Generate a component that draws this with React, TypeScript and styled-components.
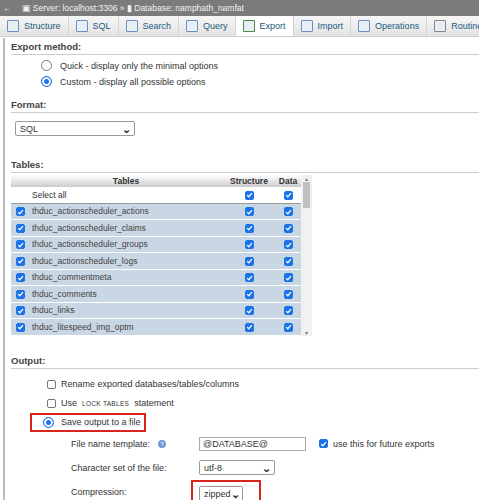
import React from 'react'
import styled, { createGlobalStyle } from 'styled-components'

const Global = createGlobalStyle`
  body { margin: 0; background: #fff; font-family: "Liberation Sans", Arial, sans-serif; font-size: 9px; color: #333; }
`

const tabs = ['Structure', 'SQL', 'Search', 'Query', 'Export', 'Import', 'Operations', 'Routines', 'Events']
const tables = [
  'thduc_actionscheduler_actions',
  'thduc_actionscheduler_claims',
  'thduc_actionscheduler_groups',
  'thduc_actionscheduler_logs',
  'thduc_commentmeta',
  'thduc_comments',
  'thduc_links',
  'thduc_litespeed_img_optm',
]

const Check: React.FC<{ on?: boolean }> = ({ on = true }) => (
  <CheckBox $on={on}>
    {on && (
      <svg width="8" height="8" viewBox="0 0 8 8">
        <path d="M1.3 4.2 L3.2 6 L6.8 1.8" stroke="#fff" strokeWidth="1.4" fill="none" />
      </svg>
    )}
  </CheckBox>
)

const Radio: React.FC<{ on?: boolean }> = ({ on }) => <RadioDot $on={on} />

const App: React.FC = () => (
  <>
    <Global />
    <ServerBar>
      <span>←</span>
      <span>▣ Server: localhost:3306 » ▮ Database: namphath_namfat</span>
    </ServerBar>
    <TabBar>
      {tabs.map((t) => (
        <Tab key={t} $active={t === 'Export'}>
          <TabIcon $c={t === 'Export' ? '#4a8a3a' : t === 'Routines' ? '#888' : '#6b8fbf'} />
          {t}
        </Tab>
      ))}
    </TabBar>
    <Page>
      <Heading>Export method:</Heading>
      <Options>
        <Opt><Radio />Quick - display only the minimal options</Opt>
        <Opt><Radio on />Custom - display all possible options</Opt>
      </Options>
      <Heading>Format:</Heading>
      <Select style={{ width: 120, marginLeft: 4 }}>SQL<Chev>⌄</Chev></Select>
      <Heading>Tables:</Heading>
      <TableWrap>
        <Table>
          <thead>
            <tr>
              <Th style={{ width: 14 }}></Th>
              <Th>Tables</Th>
              <Th style={{ width: 48 }}>Structure</Th>
              <Th style={{ width: 22 }}>Data</Th>
            </tr>
          </thead>
          <tbody>
            <SelRow>
              <Td></Td>
              <Td>Select all</Td>
              <Td $c><Check /></Td>
              <Td $c><Check /></Td>
            </SelRow>
            {tables.map((t) => (
              <Row key={t}>
                <Td $c><Check /></Td>
                <Td>{t}</Td>
                <Td $c><Check /></Td>
                <Td $c><Check /></Td>
              </Row>
            ))}
          </tbody>
        </Table>
        <Scroll>
          <span>▴</span>
          <Thumb />
          <span style={{ marginTop: 'auto' }}>▾</span>
        </Scroll>
      </TableWrap>
      <Heading style={{ marginTop: 16 }}>Output:</Heading>
      <OutList>
        <Line $indent={36}><Check on={false} />Rename exported databases/tables/columns</Line>
        <Line $indent={36}><Check on={false} />Use <Small>LOCK TABLES</Small> statement</Line>
        <RedBox><Radio on />Save output to a file</RedBox>
        <Field>
          <Label>File name template: <Help>?</Help></Label>
          <Input>@DATABASE@</Input>
          <Check /> use this for future exports
        </Field>
        <Field>
          <Label>Character set of the file:</Label>
          <Select style={{ width: 76 }}>utf-8<Chev>⌄</Chev></Select>
        </Field>
        <Field>
          <Label>Compression:</Label>
          <RedWrap>
            <Select style={{ width: 44 }}>zipped<Chev>⌄</Chev></Select>
          </RedWrap>
        </Field>
      </OutList>
    </Page>
  </>
)

export default App

const ServerBar = styled.div`
  height: 16px;
  background: #7b7b7b;
  color: #f2f2f2;
  display: flex;
  align-items: center;
  gap: 10px;
  padding-left: 3px;
  font-size: 8.5px;
`
const TabBar = styled.div`
  height: 20px;
  background: linear-gradient(#f6f6f6, #e3e3e3);
  border-bottom: 1px solid #ccc;
  display: flex;
  white-space: nowrap;
  overflow: hidden;
`
const Tab = styled.div<{ $active?: boolean }>`
  display: flex;
  align-items: center;
  gap: 5px;
  padding: 0 7px;
  border-right: 1px solid #d4d4d4;
  background: ${(p) => (p.$active ? '#fff' : 'transparent')};
  color: #235a81;
  font-size: 9px;
`
const TabIcon = styled.span<{ $c: string }>`
  width: 10px;
  height: 10px;
  border: 1px solid ${(p) => p.$c};
  background: #e8eef6;
  border-radius: 1px;
`
const Page = styled.div`
  border-left: 2px solid #bbb;
  margin-left: 3px;
  padding-left: 6px;
`
const Heading = styled.div`
  font-weight: bold;
  font-size: 9.5px;
  color: #444;
  padding: 3px 0 2px;
  border-bottom: 1px solid #ccc;
  margin-top: 1px;
`
const Options = styled.div`
  padding: 5px 0 8px 30px;
  display: flex;
  flex-direction: column;
  gap: 5px;
`
const Opt = styled.div`
  display: flex;
  align-items: center;
  gap: 8px;
`
const RadioDot = styled.span<{ $on?: boolean }>`
  width: 9px;
  height: 9px;
  border-radius: 50%;
  border: 1px solid ${(p) => (p.$on ? '#1a73e8' : '#777')};
  box-shadow: inset 0 0 0 2px #fff;
  background: ${(p) => (p.$on ? '#1a73e8' : '#fff')};
  flex: none;
`
const Select = styled.div`
  height: 15px;
  border: 1px solid #999;
  border-radius: 2px;
  margin: 8px 0 20px;
  display: flex;
  align-items: center;
  padding: 0 3px 0 4px;
  box-sizing: border-box;
  background: #fff;
  font-size: 9px;
`
const Chev = styled.span`
  margin-left: auto;
  font-size: 11px;
  line-height: 6px;
  font-weight: bold;
`
const TableWrap = styled.div`
  display: flex;
  margin-top: 2px;
  width: 302px;
`
const Table = styled.table`
  border-collapse: collapse;
  width: 290px;
  font-size: 8.5px;
`
const Th = styled.th`
  background: linear-gradient(#fff, #ccc);
  height: 12px;
  font-weight: bold;
  color: #333;
  font-size: 8.5px;
  padding: 0 2px;
`
const Td = styled.td<{ $c?: boolean }>`
  height: 15.5px;
  padding: 0 3px;
  text-align: ${(p) => (p.$c ? 'center' : 'left')};
`
const SelRow = styled.tr`
  background: #fff;
  border-bottom: 1px solid #999;
`
const Row = styled.tr`
  background: #c9d6e3;
  border-bottom: 1px solid #fff;
  color: #444;
`
const Scroll = styled.div`
  width: 11px;
  background: #f1f1f1;
  display: flex;
  flex-direction: column;
  align-items: center;
  font-size: 6px;
  color: #777;
`
const Thumb = styled.div`
  width: 7px;
  height: 26px;
  background: #c1c1c1;
`
const CheckBox = styled.span<{ $on: boolean }>`
  display: inline-flex;
  align-items: center;
  justify-content: center;
  width: 9px;
  height: 9px;
  border-radius: 2px;
  vertical-align: middle;
  background: ${(p) => (p.$on ? '#1a73e8' : '#fff')};
  border: 1px solid ${(p) => (p.$on ? '#1a73e8' : '#777')};
  box-sizing: border-box;
  flex: none;
`
const OutList = styled.div`
  display: flex;
  flex-direction: column;
  padding-top: 6px;
`
const Line = styled.div<{ $indent: number }>`
  display: flex;
  align-items: center;
  gap: 5px;
  padding-left: ${(p) => p.$indent}px;
  height: 19px;
`
const Small = styled.span`
  font-size: 6.5px;
  letter-spacing: 0.3px;
`
const RedBox = styled.div`
  display: flex;
  align-items: center;
  gap: 7px;
  margin-left: 19px;
  width: 116px;
  height: 19px;
  border: 2px solid #d9241c;
  box-sizing: border-box;
  padding-left: 11px;
  white-space: nowrap;
`
const Field = styled.div`
  display: flex;
  align-items: center;
  gap: 5px;
  padding-left: 60px;
  height: 24px;
  & ${Select} { margin: 0; }
`
const Label = styled.div`
  width: 123px;
  display: flex;
  align-items: center;
  gap: 8px;
`
const Help = styled.span`
  width: 8px;
  height: 8px;
  border-radius: 50%;
  background: #6d9ad3;
  color: #fff;
  font-size: 6px;
  text-align: center;
  line-height: 8px;
`
const Input = styled.div`
  width: 107px;
  height: 14px;
  border: 1px solid #aaa;
  padding-left: 3px;
  display: flex;
  align-items: center;
  margin-right: 8px;
  box-sizing: border-box;
  font-size: 9px;
`
const RedWrap = styled.div`
  border: 2px solid #d9241c;
  padding: 4px 16px 6px 6px;
  margin-top: 6px;
  margin-left: -8px;
`
